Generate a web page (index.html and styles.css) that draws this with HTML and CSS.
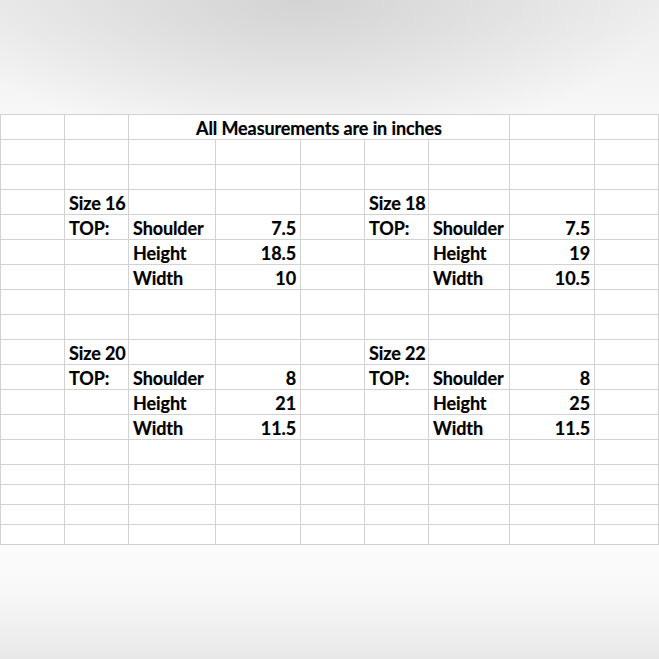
FILE: index.html
```html
<!DOCTYPE html>
<html>
<head>
<meta charset="utf-8">
<link rel="stylesheet" href="styles.css">
</head>
<body>
<div class="page">
  <div class="top-shade"></div>
  <div class="sheet">
    <div class="row"><div class="c"></div><div class="c"></div><div class="c title">All Measurements are in inches</div><div class="c"></div><div class="c"></div></div>
    <div class="row"><div class="c"></div><div class="c"></div><div class="c"></div><div class="c"></div><div class="c"></div><div class="c"></div><div class="c"></div><div class="c"></div><div class="c"></div></div>
    <div class="row"><div class="c"></div><div class="c"></div><div class="c"></div><div class="c"></div><div class="c"></div><div class="c"></div><div class="c"></div><div class="c"></div><div class="c"></div></div>
    <div class="row"><div class="c"></div><div class="c">Size 16</div><div class="c"></div><div class="c"></div><div class="c"></div><div class="c">Size 18</div><div class="c"></div><div class="c"></div><div class="c"></div></div>
    <div class="row"><div class="c"></div><div class="c">TOP:</div><div class="c">Shoulder</div><div class="c num">7.5</div><div class="c"></div><div class="c">TOP:</div><div class="c">Shoulder</div><div class="c num">7.5</div><div class="c"></div></div>
    <div class="row"><div class="c"></div><div class="c"></div><div class="c">Height</div><div class="c num">18.5</div><div class="c"></div><div class="c"></div><div class="c">Height</div><div class="c num">19</div><div class="c"></div></div>
    <div class="row"><div class="c"></div><div class="c"></div><div class="c">Width</div><div class="c num">10</div><div class="c"></div><div class="c"></div><div class="c">Width</div><div class="c num">10.5</div><div class="c"></div></div>
    <div class="row"><div class="c"></div><div class="c"></div><div class="c"></div><div class="c"></div><div class="c"></div><div class="c"></div><div class="c"></div><div class="c"></div><div class="c"></div></div>
    <div class="row"><div class="c"></div><div class="c"></div><div class="c"></div><div class="c"></div><div class="c"></div><div class="c"></div><div class="c"></div><div class="c"></div><div class="c"></div></div>
    <div class="row"><div class="c"></div><div class="c">Size 20</div><div class="c"></div><div class="c"></div><div class="c"></div><div class="c">Size 22</div><div class="c"></div><div class="c"></div><div class="c"></div></div>
    <div class="row"><div class="c"></div><div class="c">TOP:</div><div class="c">Shoulder</div><div class="c num">8</div><div class="c"></div><div class="c">TOP:</div><div class="c">Shoulder</div><div class="c num">8</div><div class="c"></div></div>
    <div class="row"><div class="c"></div><div class="c"></div><div class="c">Height</div><div class="c num">21</div><div class="c"></div><div class="c"></div><div class="c">Height</div><div class="c num">25</div><div class="c"></div></div>
    <div class="row"><div class="c"></div><div class="c"></div><div class="c">Width</div><div class="c num">11.5</div><div class="c"></div><div class="c"></div><div class="c">Width</div><div class="c num">11.5</div><div class="c"></div></div>
    <div class="row"><div class="c"></div><div class="c"></div><div class="c"></div><div class="c"></div><div class="c"></div><div class="c"></div><div class="c"></div><div class="c"></div><div class="c"></div></div>
    <div class="row short"><div class="c"></div><div class="c"></div><div class="c"></div><div class="c"></div><div class="c"></div><div class="c"></div><div class="c"></div><div class="c"></div><div class="c"></div></div>
    <div class="row short"><div class="c"></div><div class="c"></div><div class="c"></div><div class="c"></div><div class="c"></div><div class="c"></div><div class="c"></div><div class="c"></div><div class="c"></div></div>
    <div class="row short"><div class="c"></div><div class="c"></div><div class="c"></div><div class="c"></div><div class="c"></div><div class="c"></div><div class="c"></div><div class="c"></div><div class="c"></div></div>
    <div class="row short"><div class="c"></div><div class="c"></div><div class="c"></div><div class="c"></div><div class="c"></div><div class="c"></div><div class="c"></div><div class="c"></div><div class="c"></div></div>
  </div>
  <div class="bottom-shade"></div>
</div>
</body>
</html>
```
FILE: styles.css
```css
html, body {
  margin: 0;
  padding: 0;
}
body {
  width: 659px;
  height: 659px;
  overflow: hidden;
  font-family: Lato, "Open Sans", sans-serif;
  font-weight: 700;
  color: #000000;
}
.page {
  display: flex;
  flex-direction: column;
  height: 659px;
}
.top-shade {
  height: 114px;
  flex: none;
  background:
    radial-gradient(ellipse 360px 150px at 300px 0px, rgba(205,205,205,0.8), rgba(205,205,205,0) 100%),
    linear-gradient(to bottom, #ececec 0%, #f7f7f7 100%);
}
.sheet {
  flex: none;
  width: 659px;
  box-sizing: border-box;
  border-left: 1px solid #d2d2d2;
  border-top: 1px solid #d2d2d2;
  background: #ffffff;
}
.row {
  display: grid;
  grid-template-columns: 64px 64px 87px 85px 64px 64px 81px 85px 64px;
  height: 25px;
}
.row.short {
  height: 20px;
}
.c {
  box-sizing: border-box;
  border-right: 1px solid #d2d2d2;
  border-bottom: 1px solid #d2d2d2;
  font-size: 18px;
  line-height: 20px;
  padding: 0 4px 1px 4px;
  display: flex;
  align-items: flex-end;
  white-space: nowrap;
  letter-spacing: -0.1px;
  -webkit-text-stroke: 0.2px #000;
}
.c.title {
  grid-column: span 5;
  justify-content: center;
}
.c.num {
  justify-content: flex-end;
}
.bottom-shade {
  flex: 1;
  background: linear-gradient(to bottom, #fbfbfb 0%, #f8f8f8 40%, #e8e8e8 100%);
}
```
